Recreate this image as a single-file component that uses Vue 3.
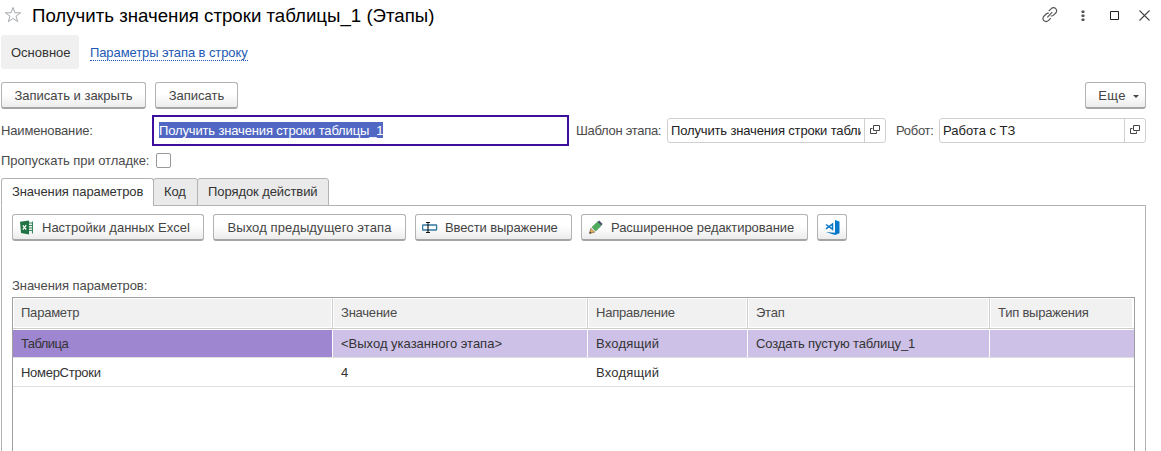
<script setup>
const columns = ['Параметр', 'Значение', 'Направление', 'Этап', 'Тип выражения']
const rows = [
  ['Таблица', '<Выход указанного этапа>', 'Входящий', 'Создать пустую таблицу_1', ''],
  ['НомерСтроки', '4', 'Входящий', '', ''],
]
</script>

<template>
  <main class="window">
    <header class="title-bar">
      <svg class="star" width="18" height="18" viewBox="0 0 18 18"><path d="M9 1.400l1.900 5.400h5.700l-4.600 3.400 1.700 5.500L9 12.400l-4.700 3.300L6 10.200 1.400 6.800h5.700z" fill="none" stroke="#a5a9ae" /></svg>
      <h1>Получить значения строки таблицы_1 (Этапы)</h1>
      <div class="window-tools">
        <svg width="18" height="18" viewBox="0 0 18 18" fill="none" stroke="#555" stroke-width="1.200"><path d="M7.800 5L10.300 2.600a3 3 0 0 1 4.400 0 3 3 0 0 1 0 4.400L12.200 9.400Q11.200 10.200 9.800 9.900M9.800 12.100L7.300 14.600a3 3 0 0 1-4.400 0 3 3 0 0 1 0-4.400L5.400 7.800Q6.400 7 7.800 7.300M6.300 11.300L11.300 6.200" /></svg>
        <svg width="4" height="12" viewBox="0 0 4 12" fill="#555"><rect x=".5" y="0.500" width="3" height="2.500" rx=".7" /><rect x=".5" y="4.500" width="3" height="2.500" rx=".7" /><rect x=".5" y="8.500" width="3" height="2.500" rx=".7" /></svg>
        <svg width="9" height="9" viewBox="0 0 9 9"><path d="M.5.5h8v8h-8z" fill="none" stroke="#222" /></svg>
        <svg width="11" height="11" viewBox="0 0 11 11"><path d="M.5.5l10 10M10.500.5l-10 10" stroke="#444" stroke-width="1.100" /></svg>
      </div>
    </header>

    <nav class="nav">
      <span class="nav-current">Основное</span>
      <a class="nav-link">Параметры этапа в строку</a>
    </nav>

    <div class="commands">
      <button class="btn save-close">Записать и закрыть</button>
      <button class="btn save">Записать</button>
      <button class="btn more">Еще <i class="caret"></i></button>
    </div>

    <div class="fields">
      <label class="name-label">Наименование:</label>
      <div class="name-input"><span class="selection">Получить значения строки таблицы_1</span></div>
      <label class="tpl-label">Шаблон этапа:</label>
      <div class="ref-input tpl"><span>Получить значения строки таблицы_1</span><b><svg width="10" height="10" viewBox="0 0 10 10" fill="none" stroke="#444"><path d="M3.500.5h6v5h-6zM2.500 3.500h-2v5h6v-2" /></svg></b></div>
      <label class="robot-label">Робот:</label>
      <div class="ref-input robot"><span>Работа с ТЗ</span><b><svg width="10" height="10" viewBox="0 0 10 10" fill="none" stroke="#444"><path d="M3.500.5h6v5h-6zM2.500 3.500h-2v5h6v-2" /></svg></b></div>
    </div>

    <div class="skip"><label>Пропускать при отладке:</label><i class="checkbox"></i></div>

    <div class="tabs">
      <span class="tab active">Значения параметров</span>
      <span class="tab code">Код</span>
      <span class="tab order">Порядок действий</span>
    </div>

    <section class="panel">
      <div class="toolbar">
        <button class="btn excel">
          <svg width="14" height="15" viewBox="0 0 14 15"><path d="M8 1.500h5v12H8z" fill="#e7f2eb" /><path d="M9 3h4M9 5.500h4M9 8h4M9 10.500h4M12.500 1.500v12" stroke="#39845a" /><path d="M0 1.700L9 .5v14L1 13z" fill="#217346" /><path d="M2.800 5.300l3.400 4.200M6.200 5.100L2.800 9.700" stroke="#fff" stroke-width="1.200" /></svg>
          <span>Настройки данных Excel</span>
        </button>
        <button class="btn prev">Выход предыдущего этапа</button>
        <button class="btn expr">
          <svg width="16" height="11" viewBox="0 0 16 11" fill="none"><rect x=".6" y="3" width="14" height="5" rx=".5" stroke="#33769f" stroke-width="1.300" /><path d="M4 .5h1.500l.5.500.5-.5H8M4 10.500h1.500l.5-.5.5.500H8M6 1v9" stroke="#111" stroke-width="1.100" /></svg>
          <span>Ввести выражение</span>
        </button>
        <button class="btn adv">
          <svg width="14" height="14" viewBox="0 0 14 14"><path d="M.5 13.500l1.300-5.200 3.900 3.900z" fill="#efb35a" stroke="#655039" stroke-width=".6" /><path d="M3 7.300L8.500 1.900l3.700 3.700-5.500 5.400z" fill="#4caf5b" stroke="#397c45" stroke-width=".6" /><path d="M8.500 1.900L10.100.4l3.500 3.600-1.400 1.600z" fill="#454f67" /><path d="M.5 13.500l.5-2 1.500 1.500z" fill="#333" /></svg>
          <span>Расширенное редактирование</span>
        </button>
        <button class="btn vscode"><svg width="15" height="15" viewBox="0 0 15 15"><path d="M10 0l4.500 1.500v11.800L10 15 .8 12l9.200.8z" fill="#0878ca" /><path d="M1 4.500l6.500 4.800V4L1 8.900" fill="none" stroke="#0878ca" stroke-width="1.500" /></svg></button>
      </div>

      <div class="table-label">Значения параметров:</div>
      <div class="table">
        <div class="row head"><span v-for="c in columns" :key="c" class="cell">{{ c }}</span></div>
        <div v-for="(r, i) in rows" :key="i" class="row" :class="{ selected: i === 0 }">
          <span v-for="(v, j) in r" :key="j" class="cell">{{ v }}</span>
        </div>
      </div>
    </section>
  </main>
</template>

<style>
body { background: #fff; }
</style>

<style scoped>
* { box-sizing: border-box; }
.window { width: 1161px; height: 451px; overflow: hidden; display: flex; flex-direction: column; font: 13px/15px "Liberation Sans", Arial, sans-serif; color: #4a4a4a; white-space: nowrap; background: #fff; }
.title-bar { height: 35px; padding: 0 11px 4px 4px; display: flex; align-items: center; flex: none; }
.star { margin-top: -1px; }
h1 { margin: 0 0 0 10px; font-size: 18.67px; line-height: 22px; font-weight: 400; color: #000; }
.window-tools { margin-left: auto; display: flex; align-items: center; }
.window-tools svg:nth-child(1) { margin-right: 2px; margin-top: -2px; }
.window-tools svg:nth-child(2) { margin-left: 20px; }
.window-tools svg:nth-child(3) { margin-left: 25px; }
.window-tools svg:nth-child(4) { margin-left: 20px; }
.nav { height: 34px; flex: none; display: flex; align-items: center; padding-left: 1px; }
.nav-current { width: 78px; height: 34px; padding-left: 10px; line-height: 35px; background: #f0f0f0; border-radius: 3px; color: #333; }
.nav-link { margin: 2px 0 0 11px; color: #2359b5; border-bottom: 1px dotted #2359b5; line-height: 14px; letter-spacing: -.1px; }
.commands { margin-top: 13px; height: 27px; flex: none; display: flex; gap: 9px; padding: 0 15px 0 1px; }
.btn { height: 27px; padding: 1px 0 0; border: 1px solid #b3b3b3; border-bottom: 2px solid #a5a5a5; border-radius: 3px; background: linear-gradient(#fff 45%, #ececec); font: 13px/15px "Liberation Sans", Arial, sans-serif; color: #444; display: flex; align-items: center; justify-content: center; white-space: nowrap; }
.save-close { width: 145px; }
.save { width: 83px; }
.more { width: 61px; margin-left: auto; padding-left: 6px; letter-spacing: .4px; }
.caret { border: 3px solid transparent; border-top-color: #444; border-bottom: 0; margin-left: 7px; margin-top: 2px; }
.fields { margin-top: 6px; height: 31px; flex: none; display: flex; align-items: center; padding-left: 1px; }
.name-label { width: 151px; letter-spacing: -.15px; }
.name-input { width: 417px; height: 31px; border: 2px solid #3b0e9c; padding: 5px; display: flex; }
.selection { background: #5068c4; color: #fff; height: 16px; line-height: 17px; letter-spacing: -.15px; }
.tpl-label { width: 91px; margin-left: 7px; letter-spacing: -.3px; }
.ref-input { height: 25px; border: 1px solid #d0d0d0; border-radius: 3px; display: flex; color: #222; line-height: 23px; padding-left: 3px; }
.ref-input span { flex: 1; overflow: hidden; margin-right: 3px; }
.ref-input b { width: 21px; border-left: 1px solid #d0d0d0; display: flex; align-items: center; justify-content: center; }
.ref-input svg { margin-top: -1px; }
.tpl { width: 219px; letter-spacing: -.15px; }
.robot-label { width: 43px; margin-left: 10px; letter-spacing: -.3px; }
.robot { width: 207px; }
.skip { margin-top: 7px; height: 15px; flex: none; display: flex; padding-left: 1px; }
.skip label { width: 155px; letter-spacing: -.06px; }
.checkbox { width: 15px; height: 15px; border: 1px solid #999; border-radius: 2px; }
.tabs { margin: 10px 0 -1px 1px; height: 28px; flex: none; display: flex; position: relative; z-index: 1; color: #333; letter-spacing: -.08px; }
.tab { border: 1px solid #b3b3b3; border-radius: 3px 3px 0 0; background: #eaeaea; line-height: 26px; padding-left: 10px; margin-right: -1px; }
.active { background: #fff; border-bottom-color: #fff; width: 153px; }
.code { width: 45px; }
.order { width: 132px; }
.panel { width: 1145px; margin-left: 1px; flex: 1; border: 1px solid #b3b3b3; border-bottom: 0; padding: 8px 10px 0; display: flex; flex-direction: column; }
.toolbar { display: flex; gap: 9px; }
.toolbar .btn span { margin-left: 8px; }
.toolbar .excel, .toolbar .expr, .toolbar .adv { justify-content: flex-start; padding-left: 7px; }
.toolbar .btn svg { margin-top: -1px; }
.excel { width: 192px; }
.prev { width: 193px; letter-spacing: .12px; }
.toolbar .expr { width: 157px; padding-left: 6px; letter-spacing: -.1px; }
.toolbar .expr span { margin-left: 7px; }
.adv { width: 227px; letter-spacing: -.06px; }
.vscode { width: 30px; }
.table-label { margin-top: 37px; letter-spacing: -.06px; }
.table { margin-top: 4px; flex: 1; border: 1px solid #a0a0a0; border-bottom: 0; }
.row { display: grid; grid-template-columns: 320px 255px 160px 242px 1fr; height: 29px; border-bottom: 1px solid #e0e0e0; color: #333; }
.cell { padding-left: 8px; line-height: 29px; border-right: 1px solid transparent; }
.cell:first-child { letter-spacing: -.28px; }
.cell:nth-child(3) { letter-spacing: .2px; }
.cell:nth-child(4) { letter-spacing: -.12px; }
.cell:last-child { border-right: 0; }
.head { height: 31px; border-bottom-color: #ccc; color: #4a4a4a; }
.head .cell { border: 1px solid #fff; border-right-color: #ccc; padding-left: 7px; background: #f1f1f1; line-height: 28px; box-shadow: inset -1px 0 #fff; letter-spacing: -.22px; }
.head .cell:last-child { border-right: 1px solid #fff; }
.selected .cell { background: #cdc1e8; border-right-color: #fff; margin: 1px 0; line-height: 27px; }
.selected .cell:first-child { background: #9e86d1; letter-spacing: -.55px; }
</style>
